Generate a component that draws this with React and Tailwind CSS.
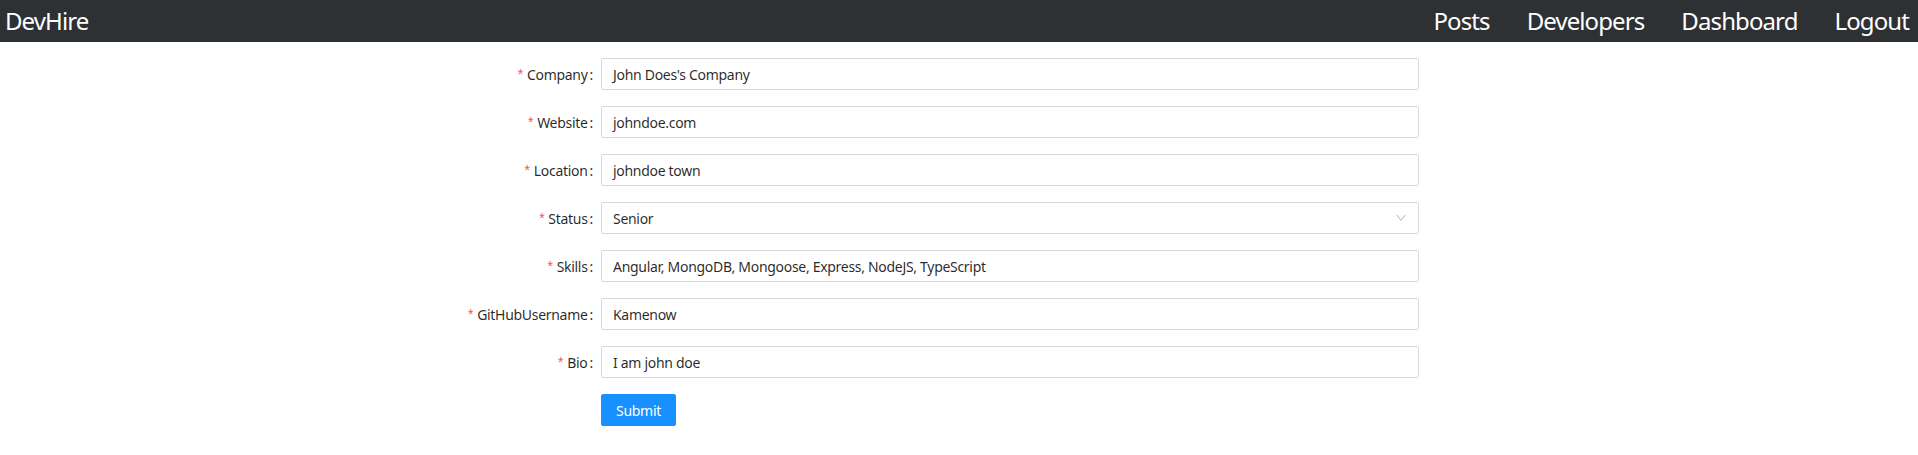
// App.jsx

const fields = [
  { label: "Company", value: "John Does's Company" },
  { label: "Website", value: "johndoe.com" },
  { label: "Location", value: "johndoe town" },
  { label: "Status", value: "Senior", select: true },
  { label: "Skills", value: "Angular, MongoDB, Mongoose, Express, NodeJS, TypeScript" },
  { label: "GitHubUsername", value: "Kamenow" },
  { label: "Bio", value: "I am john doe" },
];

function ChevronDown() {
  return (
    <svg width="12" height="12" viewBox="0 0 1024 1024" fill="#bfbfbf">
      <path d="M884 256h-75c-5.1 0-9.9 2.5-12.9 6.6L512 654.2 227.9 262.6c-3-4.1-7.8-6.6-12.9-6.6h-75c-6.5 0-10.3 7.4-6.5 12.7l352.6 486.1c12.8 17.6 39 17.6 51.7 0l352.6-486.1c3.9-5.3.1-12.7-6.4-12.7z" />
    </svg>
  );
}

export default function App() {
  return (
    <div className="min-h-[455px] bg-white font-['Segoe_UI','Noto_Sans',sans-serif] tracking-[-0.3px]">
      {/* Navbar */}
      <nav className="h-[42px] bg-[#2e3134] flex items-center justify-between text-white text-[24px] leading-none tracking-[-0.9px]">
        <a className="pl-[5px]">DevHire</a>
        <div className="flex items-center gap-[37px] pr-[9px]">
          <a>Posts</a>
          <a>Developers</a>
          <a>Dashboard</a>
          <a>Logout</a>
        </div>
      </nav>

      {/* Form */}
      <form className="pt-[16px] flex flex-col gap-[16px]">
        {fields.map((f) => (
          <div key={f.label} className="flex items-center h-[32px]">
            <label className="w-[601px] shrink-0 flex justify-end items-center text-[14px] text-black/85">
              <span className="text-[#ff4d4f] mr-[4px] font-['SimSun','Liberation_Sans',sans-serif]">*</span>
              {f.label}
              <span className="ml-[2px] mr-[8px]">:</span>
            </label>
            <div className="w-[818px] h-[32px] border border-[#d9d9d9] rounded-[2px] px-[11px] flex items-center justify-between text-[14px] text-black/85">
              <span>{f.value}</span>
              {f.select && <ChevronDown />}
            </div>
          </div>
        ))}
        <div className="flex">
          <div className="w-[601px] shrink-0" />
          <button
            type="button"
            className="h-[32px] w-[75px] bg-[#1890ff] border border-[#1890ff] rounded-[2px] text-white text-[14px]"
          >
            Submit
          </button>
        </div>
      </form>
    </div>
  );
}
